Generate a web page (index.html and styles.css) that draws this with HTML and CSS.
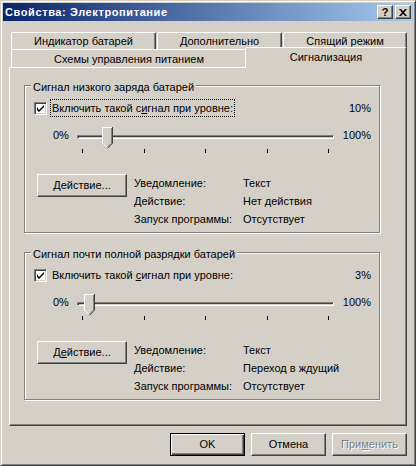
FILE: index.html
```html
<!DOCTYPE html>
<html lang="ru">
<head>
<meta charset="utf-8">
<title>Свойства: Электропитание</title>
<link rel="stylesheet" href="styles.css">
</head>
<body>
<div class="window">
  <div class="titlebar">
    <span class="title">Свойства: Электропитание</span>
    <div class="title-buttons">
      <div class="tbtn help">?</div>
      <div class="tbtn">
        <svg width="8" height="7" viewBox="0 0 8 7"><path d="M0 0h2l2 2.3L6 0h2L5 3.5 8 7H6L4 4.7 2 7H0l3-3.5z" fill="#000"/></svg>
      </div>
    </div>
  </div>

  <div class="dialog">
    <div class="tabs">
      <div class="tab-row row1">
        <div class="tab w145">Индикатор батарей</div>
        <div class="tab w125">Дополнительно</div>
        <div class="tab w124">Спящий режим</div>
      </div>
      <div class="tab-row row2">
        <div class="tab w236">Схемы управления питанием</div>
        <div class="tab selected w162">Сигнализация</div>
      </div>
    </div>

    <div class="panel">
      <div class="group">
        <div class="legend">Сигнал низкого заряда батарей</div>
        <div class="check-row">
          <div class="checkbox"><svg width="7" height="7" viewBox="0 0 7 7"><polygon points="0,2 0,5 2,7 7,2 7,0 2,5" fill="#000"/></svg></div>
          <span class="check-label focus">Включить такой с<u>и</u>гнал при уровне:</span>
          <span class="pct">10%</span>
        </div>
        <div class="slider-row">
          <span class="min">0%</span>
          <div class="track">
            <div class="groove"></div>
            <svg class="thumb" style="left:25px" width="11" height="22" viewBox="0 0 11 22">
              <polygon points="0,0 11,0 11,16 5.5,21.5 0,16" fill="#D4D0C8"/>
              <polyline points="0.5,16.5 0.5,0.5 10,0.5" fill="none" stroke="#fff"/>
              <polyline points="0.5,16 5,20.5" fill="none" stroke="#fff"/>
              <polyline points="9.5,1 9.5,16 5,20.5" fill="none" stroke="#808080"/>
              <polyline points="10.5,0 10.5,16.2 5.5,21.3" fill="none" stroke="#404040"/>
            </svg>
          </div>
          <span class="max">100%</span>
        </div>
        <div class="ticks"><i></i><i></i><i></i><i></i><i></i></div>
        <div class="details">
          <button class="btn action"><u>Д</u>ействие...</button>
          <div class="info">
            <span>Уведомление:</span><span>Текст</span>
            <span>Действие:</span><span>Нет действия</span>
            <span>Запуск программы:</span><span>Отсутствует</span>
          </div>
        </div>
      </div>

      <div class="group">
        <div class="legend">Сигнал почти полной разрядки батарей</div>
        <div class="check-row">
          <div class="checkbox"><svg width="7" height="7" viewBox="0 0 7 7"><polygon points="0,2 0,5 2,7 7,2 7,0 2,5" fill="#000"/></svg></div>
          <span class="check-label">Включить такой <u>с</u>игнал при уровне:</span>
          <span class="pct">3%</span>
        </div>
        <div class="slider-row">
          <span class="min">0%</span>
          <div class="track">
            <div class="groove"></div>
            <svg class="thumb" style="left:7px" width="11" height="22" viewBox="0 0 11 22">
              <polygon points="0,0 11,0 11,16 5.5,21.5 0,16" fill="#D4D0C8"/>
              <polyline points="0.5,16.5 0.5,0.5 10,0.5" fill="none" stroke="#fff"/>
              <polyline points="0.5,16 5,20.5" fill="none" stroke="#fff"/>
              <polyline points="9.5,1 9.5,16 5,20.5" fill="none" stroke="#808080"/>
              <polyline points="10.5,0 10.5,16.2 5.5,21.3" fill="none" stroke="#404040"/>
            </svg>
          </div>
          <span class="max">100%</span>
        </div>
        <div class="ticks"><i></i><i></i><i></i><i></i><i></i></div>
        <div class="details">
          <button class="btn action">Д<u>е</u>йствие...</button>
          <div class="info">
            <span>Уведомление:</span><span>Текст</span>
            <span>Действие:</span><span>Переход в ждущий</span>
            <span>Запуск программы:</span><span>Отсутствует</span>
          </div>
        </div>
      </div>
    </div>

    <div class="buttons">
      <button class="btn default">OK</button>
      <button class="btn">Отмена</button>
      <button class="btn disabled">При<u>м</u>енить</button>
    </div>
  </div>
</div>
</body>
</html>
```
FILE: styles.css
```css
* { box-sizing: border-box; }
html, body { margin: 0; padding: 0; }
body {
  width: 416px;
  height: 466px;
  overflow: hidden;
  background: #D4D0C8;
  font: 11px "Liberation Sans", Arial, sans-serif;
  color: #000;
}
u { text-decoration: underline; text-underline-offset: 1px; }

.window {
  width: 416px;
  height: 466px;
  display: flex;
  flex-direction: column;
  background: #D4D0C8;
  border: 1px solid;
  border-color: #D4D0C8 #404040 #404040 #D4D0C8;
  box-shadow: inset 1px 1px #fff, inset -1px -1px #808080;
  padding: 2px;
}

.titlebar {
  flex: none;
  height: 18px;
  display: flex;
  align-items: center;
  padding: 0 2px 0 2px;
  background: linear-gradient(to right, #0A246A, #A6CAF0);
}
.title {
  flex: 1;
  color: #fff;
  font-weight: bold;
  line-height: 18px;
  letter-spacing: 0.6px;
  white-space: nowrap;
}
.title-buttons { display: flex; gap: 2px; }
.tbtn {
  width: 16px;
  height: 14px;
  display: flex;
  align-items: center;
  justify-content: center;
  background: #D4D0C8;
  border: 1px solid;
  border-color: #fff #404040 #404040 #fff;
  box-shadow: inset -1px -1px #808080;
  font-weight: bold;
  font-size: 11px;
  line-height: 12px;
}
.tbtn.help { padding-bottom: 1px; }

.dialog {
  flex: 1;
  display: flex;
  flex-direction: column;
  padding: 11px 6px 7px 6px;
}

.tabs { flex: none; }
.tab-row { display: flex; padding-left: 2px; }
.row1 { gap: 1px; height: 17px; }
.row2 { height: 18px; align-items: flex-end; }
.tab {
  background: #D4D0C8;
  border: 1px solid;
  border-bottom: none;
  border-color: #fff #404040 transparent #fff;
  border-radius: 2px 2px 0 0;
  box-shadow: inset -1px 0 #808080;
  text-align: center;
  line-height: 16px;
  white-space: nowrap;
}
.row2 .tab { padding-top: 1px; height: 18px; }
.row2 .tab.selected {
  position: relative;
  z-index: 1;
  height: 21px;
  margin: 0 -2px -1px -2px;
  padding-bottom: 3px;
}
.w145 { width: 145px; }
.w125 { width: 125px; }
.w124 { width: 124px; }
.w236 { width: 236px; }
.w162 { width: 162px; }

.panel {
  flex: 1;
  border: 1px solid;
  border-color: #fff #404040 #404040 #fff;
  box-shadow: inset -1px -1px #808080;
  padding: 17px 0 0 14px;
}

.group {
  width: 356px;
  display: flex;
  flex-direction: column;
  border: 1px solid #808080;
  box-shadow: inset 1px 1px #fff, 1px 1px #fff;
  padding: 0 8px 4px 9px;
}
.group + .group { margin-top: 19px; }

.legend {
  align-self: flex-start;
  margin: -5px 0 0 -3px;
  padding: 0 2px;
  background: #D4D0C8;
  line-height: 13px;
  white-space: nowrap;
}

.check-row {
  display: flex;
  align-items: center;
  height: 18px;
  margin-top: 5px;
}
.checkbox {
  width: 13px;
  height: 13px;
  flex: none;
  display: flex;
  align-items: center;
  justify-content: center;
  background: #fff;
  border: 1px solid;
  border-color: #808080 #fff #fff #808080;
  box-shadow: inset 1px 1px #404040, inset -1px -1px #D4D0C8;
}
.check-label {
  margin-left: 3px;
  padding: 0 1px;
  line-height: 16px;
  border: 1px solid transparent;
  white-space: nowrap;
}
.check-label.focus { border: 1px dotted #000; }
.pct { margin-left: auto; line-height: 16px; }

.slider-row {
  display: flex;
  align-items: flex-start;
  margin-top: 10px;
  padding-left: 19px;
  line-height: 16px;
}
.min { width: 24px; flex: none; }
.max { margin-left: auto; }
.track {
  position: relative;
  width: 257px;
  height: 22px;
  flex: none;
}
.groove {
  margin-top: 8px;
  height: 4px;
  border: 1px solid;
  border-color: #808080 #fff #fff #808080;
  box-shadow: inset 1px 1px #404040, inset -1px -1px #D4D0C8;
}
.thumb { position: absolute; top: 0; display: block; }

.ticks {
  display: flex;
  justify-content: space-between;
  width: 257px;
  height: 4px;
  margin-left: 43px;
  padding: 0 5px;
}
.ticks i { display: block; width: 1px; height: 4px; background: #000; }

.details {
  display: flex;
  align-items: flex-start;
  margin-top: 21px;
}
.info {
  display: grid;
  grid-template-columns: 109px auto;
  line-height: 18px;
  margin-left: 7px;
  white-space: nowrap;
}

.btn {
  font: 11px "Liberation Sans", Arial, sans-serif;
  color: #000;
  background: #D4D0C8;
  border: 1px solid;
  border-color: #fff #404040 #404040 #fff;
  box-shadow: inset -1px -1px #808080;
  width: 75px;
  height: 23px;
  padding: 0;
  margin: 0;
  line-height: 21px;
  text-align: center;
  border-radius: 0;
}
.btn.action { width: 90px; margin-left: 3px; }
.btn.default {
  border-color: #000;
  box-shadow: inset 1px 1px #fff, inset -1px -1px #404040, inset -2px -2px #808080;
}
.btn.disabled { color: #808080; text-shadow: 1px 1px #fff; }

.buttons {
  flex: none;
  display: flex;
  justify-content: flex-end;
  gap: 6px;
  margin-top: 7px;
}
```
